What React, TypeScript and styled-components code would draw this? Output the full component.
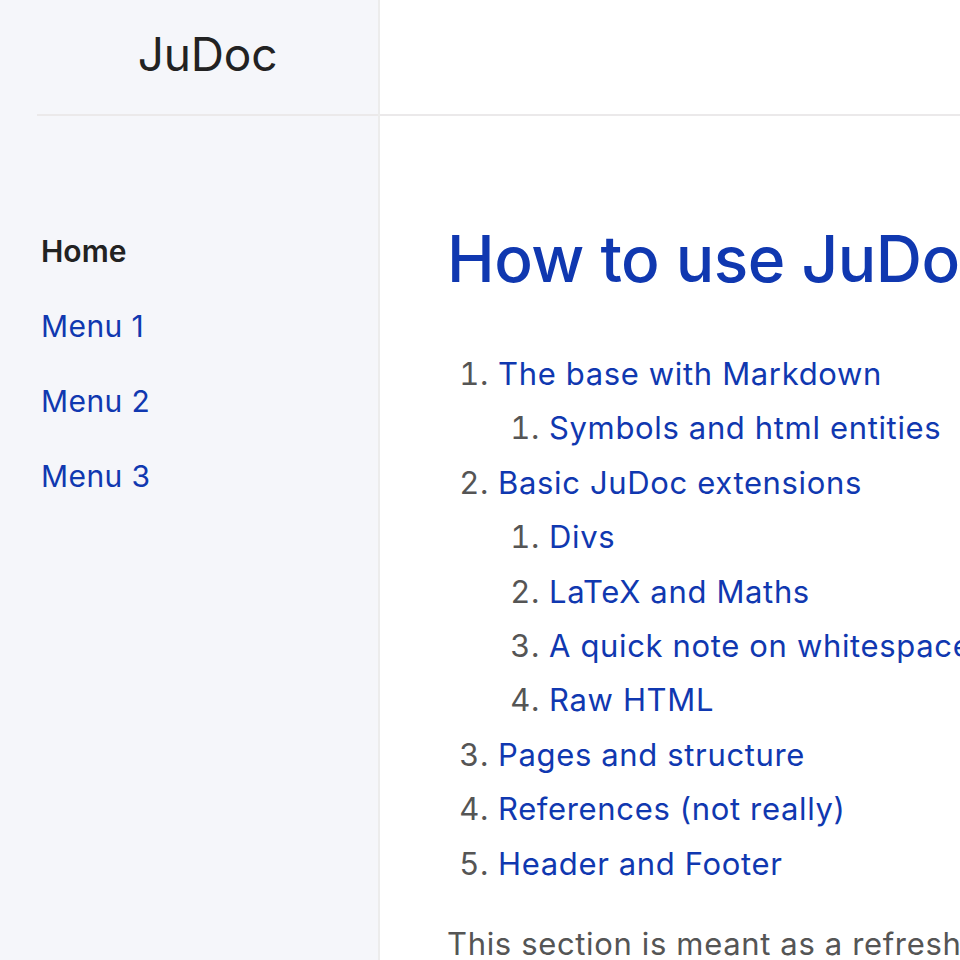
import React from "react";
import styled, { createGlobalStyle } from "styled-components";

const Global = createGlobalStyle`
  html, body { margin: 0; padding: 0; background: #ffffff; }
  body { font-family: Inter, "Noto Sans", "Liberation Sans", sans-serif; }
  * { box-sizing: border-box; }
`;

const Page = styled.div`
  display: flex;
  min-height: 100vh;
  width: 960px;
  overflow: hidden;
`;

const Sidebar = styled.aside`
  flex: 0 0 380px;
  background: #f5f6fa;
  border-right: 2px solid #ececec;
  padding-left: 37px;
  display: flex;
  flex-direction: column;
`;

const SideHeader = styled.div`
  height: 116px;
  border-bottom: 2px solid #ebe9ea;
  display: flex;
  align-items: center;
  justify-content: center;
`;

const Logo = styled.div`
  font-size: 46px;
  color: #222222;
  letter-spacing: -0.2px;
  margin-top: -6px;
`;

const Nav = styled.nav`
  display: flex;
  flex-direction: column;
  padding-top: 98px;
  padding-left: 4px;
`;

const NavItem = styled.a<{ $active?: boolean }>`
  display: block;
  height: 75px;
  line-height: 75px;
  font-size: 30px;
  letter-spacing: ${(p) => (p.$active ? "0" : "0.4px")};
  text-decoration: none;
  color: ${(p) => (p.$active ? "#222222" : "#1038b0")};
  font-weight: ${(p) => (p.$active ? 600 : 400)};
`;

const Main = styled.main`
  flex: 1 1 auto;
  min-width: 0;
  display: flex;
  flex-direction: column;
`;

const TopBar = styled.div`
  height: 116px;
  border-bottom: 2px solid #ebe9ea;
`;

const Content = styled.div`
  padding: 0 0 0 67px;
  white-space: nowrap;
`;

const Title = styled.h1`
  margin: 104px 0 50px;
  font-size: 64px;
  line-height: 77px;
  font-weight: 500;
  color: #1038b0;
  letter-spacing: -0.5px;
`;

const List = styled.ol`
  margin: 0;
  padding-left: 51px;
  color: #555555;
  font-size: 31px;
  line-height: 54.4px;
  letter-spacing: 0.65px;
`;

const Item = styled.li`
  padding-left: 0;
  &::marker { color: #555555; }
`;

const Link = styled.a`
  color: #1038b0;
  text-decoration: none;
`;

const Para = styled.p`
  margin: 26px 0 0;
  font-size: 31px;
  line-height: 54.4px;
  letter-spacing: 0.65px;
  color: #555555;
`;

type Entry = { label: string; children?: string[] };

const toc: Entry[] = [
  { label: "The base with Markdown", children: ["Symbols and html entities"] },
  {
    label: "Basic JuDoc extensions",
    children: ["Divs", "LaTeX and Maths", "A quick note on whitespaces", "Raw HTML"],
  },
  { label: "Pages and structure" },
  { label: "References (not really)" },
  { label: "Header and Footer" },
];

export default function App() {
  return (
    <>
      <Global />
      <Page>
        <Sidebar>
          <SideHeader>
            <Logo>JuDoc</Logo>
          </SideHeader>
          <Nav>
            <NavItem $active href="#">Home</NavItem>
            <NavItem href="#">Menu 1</NavItem>
            <NavItem href="#">Menu 2</NavItem>
            <NavItem href="#">Menu 3</NavItem>
          </Nav>
        </Sidebar>
        <Main>
          <TopBar />
          <Content>
            <Title>How to use JuDoc</Title>
            <List>
              {toc.map((e) => (
                <Item key={e.label}>
                  <Link href="#">{e.label}</Link>
                  {e.children && (
                    <List>
                      {e.children.map((c) => (
                        <Item key={c}>
                          <Link href="#">{c}</Link>
                        </Item>
                      ))}
                    </List>
                  )}
                </Item>
              ))}
            </List>
            <Para>This section is meant as a refresher if you're new to Markdown.</Para>
          </Content>
        </Main>
      </Page>
    </>
  );
}
